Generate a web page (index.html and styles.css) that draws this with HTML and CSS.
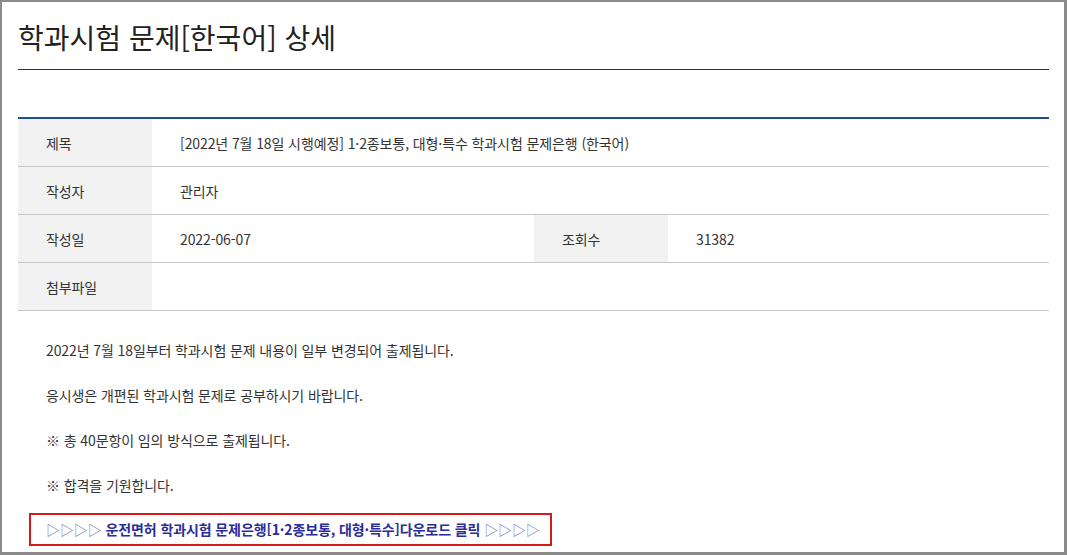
FILE: index.html
```html
<!DOCTYPE html>
<html lang="ko">
<head>
<meta charset="utf-8">
<title>학과시험 문제[한국어] 상세</title>
<link rel="stylesheet" href="styles.css">
</head>
<body>
<div class="frame">
  <h1 class="page-title">학과시험 문제[한국어] 상세</h1>
  <table class="view">
    <colgroup>
      <col class="c-label"><col class="c-value"><col class="c-label"><col class="c-value2">
    </colgroup>
    <tr>
      <th>제목</th>
      <td colspan="3">[2022년 7월 18일 시행예정] 1·2종보통, 대형·특수 학과시험 문제은행 (한국어)</td>
    </tr>
    <tr>
      <th>작성자</th>
      <td colspan="3">관리자</td>
    </tr>
    <tr>
      <th>작성일</th>
      <td>2022-06-07</td>
      <th>조회수</th>
      <td>31382</td>
    </tr>
    <tr>
      <th>첨부파일</th>
      <td colspan="3"></td>
    </tr>
  </table>
  <div class="content">
    <p>2022년 7월 18일부터 학과시험 문제 내용이 일부 변경되어 출제됩니다.</p>
    <p>응시생은 개편된 학과시험 문제로 공부하시기 바랍니다.</p>
    <p>※ 총 40문항이 임의 방식으로 출제됩니다.</p>
    <p>※ 합격을 기원합니다.</p>
    <a class="download" href="#"><span class="arrows">▷▷▷▷</span> <strong>운전면허 학과시험 문제은행[1·2종보통, 대형·특수]다운로드 클릭</strong> <span class="arrows">▷▷▷▷</span></a>
  </div>
</div>
</body>
</html>
```
FILE: styles.css
```css
html, body {
  margin: 0;
  padding: 0;
  background: #fff;
}
body {
  font-family: "Noto Sans CJK KR", "Noto Sans", sans-serif;
  color: #333;
}
.frame {
  box-sizing: border-box;
  width: 1067px;
  height: 555px;
  border: 2px solid #8a8a8a;
  border-right-width: 3px;
  border-bottom-width: 3px;
  padding: 0 15px 0 16px;
  overflow: hidden;
}
.page-title {
  margin: 0;
  padding: 16px 0 13px 0;
  font-size: 28px;
  line-height: 38px;
  font-weight: 400;
  color: #222;
  letter-spacing: 0;
  border-bottom: 1px solid #333;
}
.view {
  margin-top: 47px;
  width: 100%;
  border-collapse: collapse;
  border-top: 2px solid #1f4f92;
  font-size: 14px;
  letter-spacing: -0.1px;
}
.c-label { width: 134px; }
.c-value { width: 382px; }
.view th, .view td {
  height: 47px;
  padding: 0 0 0 28px;
  text-align: left;
  font-weight: 400;
  border-bottom: 1px solid #c8c8c8;
  vertical-align: middle;
  color: #333;
}
.view th {
  background: #f2f2f2;
}
.content {
  padding: 27px 0 0 0;
  font-size: 14px;
  letter-spacing: -0.1px;
}
.content p {
  margin: 0 0 20px 28px;
  line-height: 25px;
}
.download {
  display: inline-block;
  margin: -5px 0 0 11px;
  padding: 0 10px 0 15px;
  height: 29px;
  line-height: 29px;
  border: 2px solid #d61a1a;
  text-decoration: none;
  color: #2c2c9a;
}
.download strong {
  font-weight: 700;
}
.download .arrows {
  color: #7878b8;
}
```
